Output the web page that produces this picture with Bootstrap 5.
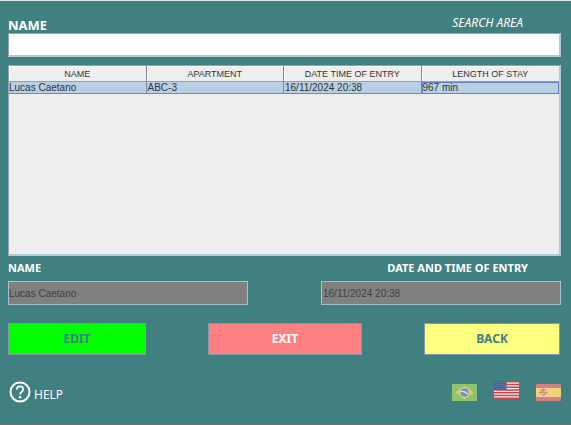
<!DOCTYPE html>
<html lang="en">
<head>
<meta charset="utf-8">
<meta name="viewport" content="width=device-width, initial-scale=1">
<title>Visitors</title>
<link href="https://cdn.jsdelivr.net/npm/bootstrap@5.3.0/dist/css/bootstrap.min.css" rel="stylesheet">
<style>
body { background: #408080; color: #fff; font: 12px/16px "Noto Sans", sans-serif; }
.screen { min-height: 100vh; padding: 16px 10px 16px 8px; border-top: 1px solid #dcebea; border-bottom: 1px solid #667574; }
.caption { font-size: 11px; font-weight: 700; line-height: 16px; }
.search-caption { font-size: 13px; font-weight: 700; }
.search-hint { font-size: 12px; font-style: italic; line-height: 12px; margin-right: 38px; }
.field { height: 24px; padding: 0; border: 1px solid #8fa3b5; border-radius: 0; font: 10px/16px "Liberation Sans", Arial, sans-serif; }
.field-search { border-right: 2px solid #b8c9d6; border-bottom: 2px solid #b8c9d6; }
.field-locked, .field-locked:disabled { background: #808080; border-color: #a9bfce; color: #404040; opacity: 1; }
.field-entry { padding-left: 1px; }
.sheet { height: 191px; background: #eee; border: 1px solid #8fa3b5; border-right: 2px solid #b8c9d6; border-bottom: 2px solid #b8c9d6; }
.grid { width: 100%; table-layout: fixed; border-collapse: separate; border-spacing: 0; color: #333; font: 10px/11px "Liberation Sans", Arial, sans-serif; }
.grid th { height: 16px; padding: 2px 0 0; font-weight: 400; font-size: 9px; text-align: center; border-right: 1px solid #7a8a99; border-bottom: 1px solid #8fa3b5; background: #eee; box-shadow: inset 1px 1px #fff; }
.grid td { height: 12px; padding: 0; background: #b8cfe5; border-right: 1px solid #7a8a99; border-bottom: 1px solid #7a8a99; }
.grid td + td { padding-left: 1px; }
.grid th:last-child { border-right: 0; }
.grid td.focused { border-color: #6382bf; box-shadow: inset 1px 1px #6382bf; }
.half { width: 240px; }
.entry-caption { margin-right: 33px; }
.details { margin-top: 5px; }
.action { height: 32px; padding: 0; border: 1px solid #8498ac; border-radius: 0; font-size: 12px; font-weight: 700; line-height: 16px; }
.action-edit { width: 138px; background: #0f0; color: #408080; }
.action-exit { width: 154px; background: #ff8080; color: #fff; }
.action-back { width: 136px; background: #ffff80; color: #408080; }
.actions { margin-top: 18px; padding-right: 1px; }
.footer-row { margin-top: 26px; }
.help { color: #fff; text-decoration: none; gap: 3px; padding-left: 1px; }
.help span { line-height: 16px; padding-top: 6px; }
.flags { gap: 17px; }
.flag { padding: 0; border: 0; background: none; }
.flag svg { display: block; }
.flag-raised { padding-bottom: 2px; }
</style>
</head>
<body>
<main class="screen">
  <div class="d-flex justify-content-between align-items-start">
    <label class="search-caption" for="search">NAME</label>
    <span class="search-hint">SEARCH AREA</span>
  </div>
  <input id="search" type="text" class="field field-search form-control shadow-none">

  <div class="sheet mt-2">
    <table class="grid">
      <thead><tr><th scope="col">NAME</th><th scope="col">APARTMENT</th><th scope="col">DATE TIME OF ENTRY</th><th scope="col">LENGTH OF STAY</th></tr></thead>
      <tbody><tr><td>Lucas Caetano</td><td>ABC-3</td><td>16/11/2024 20:38</td><td class="focused">967 min</td></tr></tbody>
    </table>
  </div>

  <div class="d-flex justify-content-between mt-1">
    <label class="caption" for="name">NAME</label>
    <label class="caption entry-caption" for="entry">DATE AND TIME OF ENTRY</label>
  </div>
  <div class="details d-flex justify-content-between">
    <input id="name" type="text" class="field field-locked half" value="Lucas Caetano" disabled>
    <input id="entry" type="text" class="field field-locked field-entry half" value="16/11/2024 20:38" disabled>
  </div>

  <div class="actions d-flex justify-content-between">
    <button type="button" class="action action-edit">EDIT</button>
    <button type="button" class="action action-exit">EXIT</button>
    <button type="button" class="action action-back">BACK</button>
  </div>

  <div class="footer-row d-flex justify-content-between align-items-start">
    <a href="#" class="help d-flex align-items-start">
      <svg width="22" height="22" viewBox="0 0 22 22" fill="none" stroke="#fff" aria-hidden="true">
        <circle cx="11" cy="11" r="9.5" stroke-width="2"/>
        <path d="M7.8 8.400C7.800 6.400 9.200 5.300 11 5.300S14.300 6.500 14.300 8.300C14.300 10.600 11.100 10.800 11.100 13.600" stroke-width="1.800"/>
        <circle cx="11.100" cy="16.300" r="1.300" fill="#fff" stroke="none"/>
      </svg>
      <span>HELP</span>
    </a>
    <div class="flags d-flex align-items-end">
      <button type="button" class="flag" aria-label="Português">
        <svg width="25" height="17" viewBox="0 0 25 17"><path fill="#8dc46c" d="M0 0h25v17H0z"/><path fill="#dcc66e" d="M12.500 1.700 22 8.500l-9.500 6.800L3 8.500z"/><circle cx="12.500" cy="8.500" r="4" fill="#5c98d0"/><path d="M8.700 7.500Q13 7 16 10.400" fill="none" stroke="#e6eef2" stroke-width="1.200"/></svg>
      </button>
      <button type="button" class="flag flag-raised" aria-label="English">
        <svg width="25" height="18" viewBox="0 0 25 18"><path fill="#f2eeee" d="M0 0h25v18H0z"/><path stroke="#c9474c" stroke-width="1.400" d="M0 .7h25M0 3.470h25M0 6.230h25M0 9h25M0 11.770h25M0 14.530h25M0 17.300h25"/><path fill="#43649b" d="M0 0h12.500v9H0z"/><path stroke="#8ea4c6" stroke-width=".7" stroke-dasharray=".8 1.500" d="M1 1.500h11M2 3.500h10M1 5.500h11M2 7.500h10"/></svg>
      </button>
      <button type="button" class="flag" aria-label="Español">
        <svg width="25" height="17" viewBox="0 0 25 17"><rect width="25" height="17" rx="1" fill="#d57e86"/><path fill="#edd379" d="M0 4h25v9H0z"/><path fill="#e3b9a0" d="M3 6h1.500v6H3zM10 6h1.500v6H10z"/><path fill="#d08080" d="M5.500 5.500 7.300 4.500l1.900 1v5q-1.900 2-3.700 0zM3 8h8.500v1H3z"/><path fill="#ecdfe0" d="M7.400 7h1.200v1.500H7.400zM6 9h1.400v1.400H6zM2.700 11.500h2.200v1H2.700zM9.600 11.500h2.200v1H9.600z"/></svg>
      </button>
    </div>
  </div>
</main>
<script src="https://cdn.jsdelivr.net/npm/bootstrap@5.3.0/dist/js/bootstrap.bundle.min.js"></script>
</body>
</html>
